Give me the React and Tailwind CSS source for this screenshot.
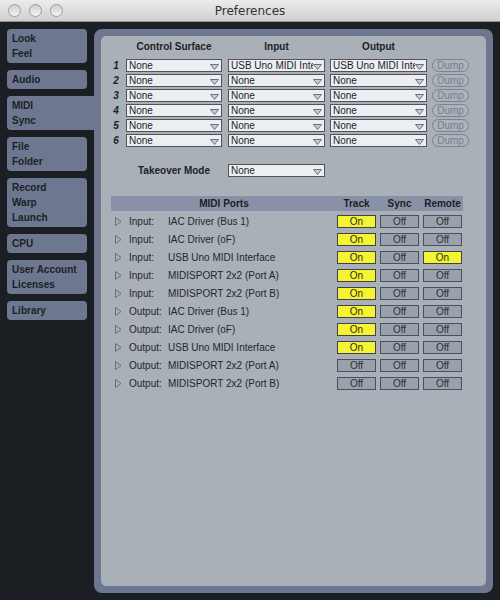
import React from 'react';

const tabs = [
  { lines: ['Look', 'Feel'] },
  { lines: ['Audio'] },
  { lines: ['MIDI', 'Sync'], active: true },
  { lines: ['File', 'Folder'] },
  { lines: ['Record', 'Warp', 'Launch'] },
  { lines: ['CPU'] },
  { lines: ['User Account', 'Licenses'] },
  { lines: ['Library'] },
];

const surfaces = [
  ['None', 'USB Uno MIDI Interface', 'USB Uno MIDI Interface'],
  ['None', 'None', 'None'],
  ['None', 'None', 'None'],
  ['None', 'None', 'None'],
  ['None', 'None', 'None'],
  ['None', 'None', 'None'],
];

const ports = [
  ['Input:', 'IAC Driver (Bus 1)', true, false, false],
  ['Input:', 'IAC Driver (oF)', true, false, false],
  ['Input:', 'USB Uno MIDI Interface', true, false, true],
  ['Input:', 'MIDISPORT 2x2 (Port A)', true, false, false],
  ['Input:', 'MIDISPORT 2x2 (Port B)', true, false, false],
  ['Output:', 'IAC Driver (Bus 1)', true, false, false],
  ['Output:', 'IAC Driver (oF)', true, false, false],
  ['Output:', 'USB Uno MIDI Interface', true, false, false],
  ['Output:', 'MIDISPORT 2x2 (Port A)', false, false, false],
  ['Output:', 'MIDISPORT 2x2 (Port B)', false, false, false],
];

function Select({ value, className }) {
  return (
    <div className={'h-[13px] flex items-center border border-[#4f545c] bg-[#eceef1] pl-[2px] pr-[2px] ' + className}>
      <span className="flex-1 overflow-hidden whitespace-nowrap text-[10px] leading-[11px] text-[#1e2228]">{value}</span>
      <svg width="9" height="6" viewBox="0 0 9 6" className="shrink-0 mt-[3px]">
        <polygon points="0.5,0.5 8.5,0.5 4.5,5.5" fill="#c9cdd3" stroke="#6b707a" strokeWidth="1" />
      </svg>
    </div>
  );
}

function Toggle({ on }) {
  return on ? (
    <div className="w-[39px] h-[13px] flex items-center justify-center border border-[#3d4250] bg-[#f4f433] text-[10px] leading-[11px] text-[#2a2b1c]">On</div>
  ) : (
    <div className="w-[39px] h-[13px] flex items-center justify-center border border-[#4a505e] bg-[#9aa1ad] text-[10px] leading-[11px] text-[#2b3038]">Off</div>
  );
}

export default function App() {
  return (
    <div className="w-[500px] h-[600px] flex flex-col bg-[#1b1f24] overflow-hidden font-['Liberation_Sans',Arial,sans-serif]">
      {/* title bar */}
      <div className="h-[22px] shrink-0 grid grid-cols-[1fr_auto_1fr] items-center bg-gradient-to-b from-[#ececec] to-[#cfcfcf] border-b border-[#8e8e8e]">
        <div className="flex items-center gap-[8px] pl-[8px]">
          <div className="w-[13px] h-[13px] rounded-full border border-[#9d9d9d] bg-gradient-to-b from-[#cfcfcf] to-[#f4f4f4]" />
          <div className="w-[13px] h-[13px] rounded-full border border-[#9d9d9d] bg-gradient-to-b from-[#cfcfcf] to-[#f4f4f4]" />
          <div className="w-[13px] h-[13px] rounded-full border border-[#9d9d9d] bg-gradient-to-b from-[#cfcfcf] to-[#f4f4f4]" />
        </div>
        <div className="text-[12px] text-[#333] font-['DejaVu_Sans',sans-serif]">Preferences</div>
        <div />
      </div>

      <div className="flex flex-1 p-[7px] min-h-0">
        {/* sidebar */}
        <div className="w-[87px] shrink-0 flex flex-col gap-[7px]">
          {tabs.map((t) => (
            <div
              key={t.lines[0]}
              className={
                'bg-[#6d7790] pt-[2px] pb-[2px] pl-[5px] text-[10px] leading-[15px] font-bold text-[#1b1f24] ' +
                (t.active ? 'w-[87px] rounded-l-[4px]' : 'w-[80px] rounded-[4px]')
              }
            >
              {t.lines.map((l) => (
                <div key={l}>{l}</div>
              ))}
            </div>
          ))}
        </div>

        {/* panel */}
        <div className="flex-1 bg-[#6d7790] rounded-[8px] p-[7px]">
          <div className="h-full bg-[#aab0b8] rounded-[5px] pl-[9px] pt-[5px]">
            {/* header */}
            <div className="flex items-center text-[10px] leading-[12px] font-bold text-[#1b1f24]">
              <div className="w-[16px]" />
              <div className="w-[96px] text-center">Control Surface</div>
              <div className="w-[97px] ml-[6px] text-center">Input</div>
              <div className="w-[97px] ml-[5px] text-center">Output</div>
            </div>

            <div className="mt-[6px] flex flex-col gap-[2px]">
              {surfaces.map((r, i) => (
                <div key={i} className="h-[13px] flex items-center">
                  <div className="w-[12px] mr-[4px] text-center text-[10px] leading-[13px] font-bold italic text-[#1b1f24]">{i + 1}</div>
                  <Select value={r[0]} className="w-[96px]" />
                  <Select value={r[1]} className="w-[97px] ml-[6px]" />
                  <Select value={r[2]} className="w-[97px] ml-[5px]" />
                  <div className="w-[37px] h-[13px] ml-[5px] rounded-full border border-[#7c828e] bg-[#adb3bb] flex items-center justify-center text-[10px] leading-[11px] text-[#7a818d]">
                    Dump
                  </div>
                </div>
              ))}
            </div>

            <div className="mt-[17px] h-[13px] flex items-center">
              <div className="w-[16px]" />
              <div className="w-[96px] text-center text-[10px] leading-[13px] font-bold text-[#1b1f24]">Takeover Mode</div>
              <Select value="None" className="w-[97px] ml-[6px]" />
            </div>

            {/* MIDI ports */}
            <div className="mt-[19px] ml-[1px] w-[352px]">
              <div className="h-[15px] flex items-center bg-[#8891a5] text-[10px] leading-[15px] font-bold text-[#1b1f24]">
                <div className="flex-1 text-center">MIDI Ports</div>
                <div className="w-[39px] text-center">Track</div>
                <div className="w-[39px] ml-[4px] text-center">Sync</div>
                <div className="w-[39px] ml-[4px] mr-[1px] text-center">Remote</div>
              </div>
              <div className="mt-[1px]">
                {ports.map((p, i) => (
                  <div key={i} className="h-[18px] flex items-center text-[10px] leading-[13px] text-[#23272d]">
                    <svg width="7" height="9" viewBox="0 0 7 9" className="ml-[4px] shrink-0">
                      <polygon points="0.5,0.5 6,4.5 0.5,8.5" fill="none" stroke="#676c77" strokeWidth="1" />
                    </svg>
                    <div className="w-[39px] ml-[7px]">{p[0]}</div>
                    <div className="flex-1">{p[1]}</div>
                    <Toggle on={p[2]} />
                    <div className="ml-[4px]"><Toggle on={p[3]} /></div>
                    <div className="ml-[4px] mr-[1px]"><Toggle on={p[4]} /></div>
                  </div>
                ))}
              </div>
            </div>
          </div>
        </div>
      </div>
    </div>
  );
}
